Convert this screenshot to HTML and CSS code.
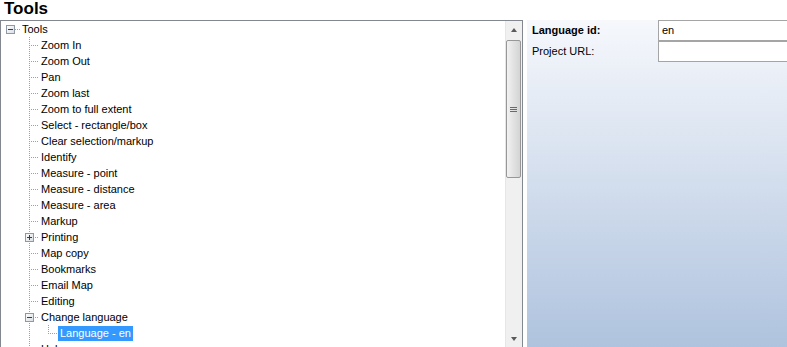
FILE: index.html
```html
<!DOCTYPE html>
<html>
<head>
<meta charset="utf-8">
<link rel="stylesheet" href="styles.css">
</head>
<body>
<div class="title">Tools</div>
<div class="main">
  <div class="tree">
    <div class="list">
      <div class="row"><span class="cell hr-box"><svg width="9" height="9"><defs><linearGradient id="g1" x1="0" y1="0" x2="1" y2="1"><stop offset="0" stop-color="#ffffff"/><stop offset="1" stop-color="#d8dde4"/></linearGradient></defs><rect x="0.5" y="0.5" width="8" height="8" fill="url(#g1)" stroke="#8e99a8"/><path d="M2 4.5h5" stroke="#2b3c78"/></svg></span><span class="label">Tools</span></div>
      <div class="row"><span class="cell"></span><span class="cell tee"></span><span class="label">Zoom In</span></div>
      <div class="row"><span class="cell"></span><span class="cell tee"></span><span class="label">Zoom Out</span></div>
      <div class="row"><span class="cell"></span><span class="cell tee"></span><span class="label">Pan</span></div>
      <div class="row"><span class="cell"></span><span class="cell tee"></span><span class="label">Zoom last</span></div>
      <div class="row"><span class="cell"></span><span class="cell tee"></span><span class="label">Zoom to full extent</span></div>
      <div class="row"><span class="cell"></span><span class="cell tee"></span><span class="label">Select - rectangle/box</span></div>
      <div class="row"><span class="cell"></span><span class="cell tee"></span><span class="label">Clear selection/markup</span></div>
      <div class="row"><span class="cell"></span><span class="cell tee"></span><span class="label">Identify</span></div>
      <div class="row"><span class="cell"></span><span class="cell tee"></span><span class="label">Measure - point</span></div>
      <div class="row"><span class="cell"></span><span class="cell tee"></span><span class="label">Measure - distance</span></div>
      <div class="row"><span class="cell"></span><span class="cell tee"></span><span class="label">Measure - area</span></div>
      <div class="row"><span class="cell"></span><span class="cell tee"></span><span class="label">Markup</span></div>
      <div class="row"><span class="cell"></span><span class="cell tee boxed"><svg width="9" height="9"><defs><linearGradient id="g2" x1="0" y1="0" x2="1" y2="1"><stop offset="0" stop-color="#ffffff"/><stop offset="1" stop-color="#d8dde4"/></linearGradient></defs><rect x="0.5" y="0.5" width="8" height="8" fill="url(#g2)" stroke="#8e99a8"/><path d="M2 4.5h5M4.5 2v5" stroke="#2b3c78"/></svg></span><span class="label">Printing</span></div>
      <div class="row"><span class="cell"></span><span class="cell tee"></span><span class="label">Map copy</span></div>
      <div class="row"><span class="cell"></span><span class="cell tee"></span><span class="label">Bookmarks</span></div>
      <div class="row"><span class="cell"></span><span class="cell tee"></span><span class="label">Email Map</span></div>
      <div class="row"><span class="cell"></span><span class="cell tee"></span><span class="label">Editing</span></div>
      <div class="row"><span class="cell"></span><span class="cell tee boxed"><svg width="9" height="9"><defs><linearGradient id="g3" x1="0" y1="0" x2="1" y2="1"><stop offset="0" stop-color="#ffffff"/><stop offset="1" stop-color="#d8dde4"/></linearGradient></defs><rect x="0.5" y="0.5" width="8" height="8" fill="url(#g3)" stroke="#8e99a8"/><path d="M2 4.5h5" stroke="#2b3c78"/></svg></span><span class="label">Change language</span></div>
      <div class="row"><span class="cell"></span><span class="cell vert"></span><span class="cell last"></span><span class="label selected">Language - en</span></div>
      <div class="row"><span class="cell"></span><span class="cell last"></span><span class="label">Help</span></div>
    </div>
    <div class="scrollbar">
      <div class="sb-btn"><span class="arrow-up"></span></div>
      <div class="thumb"><span class="grip"></span></div>
      <div class="track"></div>
      <div class="sb-btn"><span class="arrow-down"></span></div>
    </div>
  </div>
  <div class="gap"></div>
  <div class="panel">
    <div class="form">
      <div class="flabel bold">Language id:</div>
      <div class="finput">en</div>
      <div class="flabel">Project URL:</div>
      <div class="finput"></div>
    </div>
  </div>
</div>
</body>
</html>
```

FILE: styles.css
```css
html, body {
  margin: 0;
  padding: 0;
  background: #ffffff;
  font-family: "Liberation Sans", Arial, sans-serif;
  font-size: 11px;
  color: #000000;
  overflow: hidden;
}

.title {
  height: 20px;
  line-height: 18px;
  padding-left: 4px;
  font-size: 17px;
  font-weight: bold;
  box-sizing: border-box;
}

.main {
  display: flex;
  height: 327px;
}

.tree {
  width: 523px;
  box-sizing: border-box;
  border: 1px solid #828790;
  border-bottom: none;
  display: flex;
  overflow: hidden;
  background: #ffffff;
}

.list {
  flex: 1;
  overflow: hidden;
}

.row {
  display: flex;
  height: 16px;
  line-height: 16px;
  white-space: nowrap;
}

.cell {
  width: 19px;
  height: 16px;
  flex: none;
  box-sizing: border-box;
  background-repeat: no-repeat;
}

.cell svg {
  display: block;
  margin: 4px 0 0 5px;
}

.hr-box {
  background-image: repeating-linear-gradient(to right, #a0a0a0 0 1px, transparent 1px 2px);
  background-size: 5px 1px;
  background-position: 14px 8px;
}

.tee {
  background-image:
    repeating-linear-gradient(to bottom, #a0a0a0 0 1px, transparent 1px 2px),
    repeating-linear-gradient(to right, #a0a0a0 0 1px, transparent 1px 2px);
  background-size: 1px 16px, 10px 1px;
  background-position: 9px 0, 9px 8px;
}

.last {
  background-image:
    repeating-linear-gradient(to bottom, #a0a0a0 0 1px, transparent 1px 2px),
    repeating-linear-gradient(to right, #a0a0a0 0 1px, transparent 1px 2px);
  background-size: 1px 9px, 10px 1px;
  background-position: 9px 0, 9px 8px;
}

.vert {
  background-image: repeating-linear-gradient(to bottom, #a0a0a0 0 1px, transparent 1px 2px);
  background-size: 1px 16px;
  background-position: 9px 0;
}

.label {
  padding: 0 2px;
  height: 15px;
  line-height: 15px;
  margin-top: 1px;
}

.selected {
  background: #3399ff;
  color: #ffffff;
}

.scrollbar {
  width: 17px;
  flex: none;
  display: flex;
  flex-direction: column;
  background: #f0f0f0;
  border-left: 1px solid #e6e6e6;
  box-sizing: border-box;
}

.sb-btn {
  height: 17px;
  flex: none;
  display: flex;
  align-items: center;
  justify-content: center;
}

.arrow-up {
  width: 0;
  height: 0;
  border-left: 3.5px solid transparent;
  border-right: 3.5px solid transparent;
  border-bottom: 4px solid #5a5a5a;
}

.arrow-down {
  width: 0;
  height: 0;
  border-left: 3.5px solid transparent;
  border-right: 3.5px solid transparent;
  border-top: 4px solid #5a5a5a;
}

.thumb {
  height: 138px;
  margin: 2px 1px 0 0;
  flex: none;
  box-sizing: border-box;
  border: 1px solid #979797;
  border-radius: 2px;
  background: linear-gradient(to right, #f2f2f2, #e2e2e2 50%, #d4d4d4);
  display: flex;
  align-items: center;
  justify-content: center;
}

.grip {
  width: 7px;
  height: 5px;
  background: repeating-linear-gradient(to bottom, #6a6a6a 0 1px, transparent 1px 2px);
}

.track {
  flex: 1;
}

.gap {
  width: 4px;
  flex: none;
}

.panel {
  flex: 1;
  overflow: hidden;
  background: linear-gradient(to bottom, #f6f8fc, #afc3de);
}

.form {
  display: grid;
  grid-template-columns: 126px 160px;
  grid-auto-rows: 21px;
  row-gap: 0;
  padding-left: 5px;
}

.flabel {
  line-height: 21px;
  white-space: nowrap;
}

.bold {
  font-weight: bold;
}

.finput {
  box-sizing: border-box;
  border: 1px solid #a5a5a5;
  background: #ffffff;
  line-height: 19px;
  padding-left: 3px;
}
```
